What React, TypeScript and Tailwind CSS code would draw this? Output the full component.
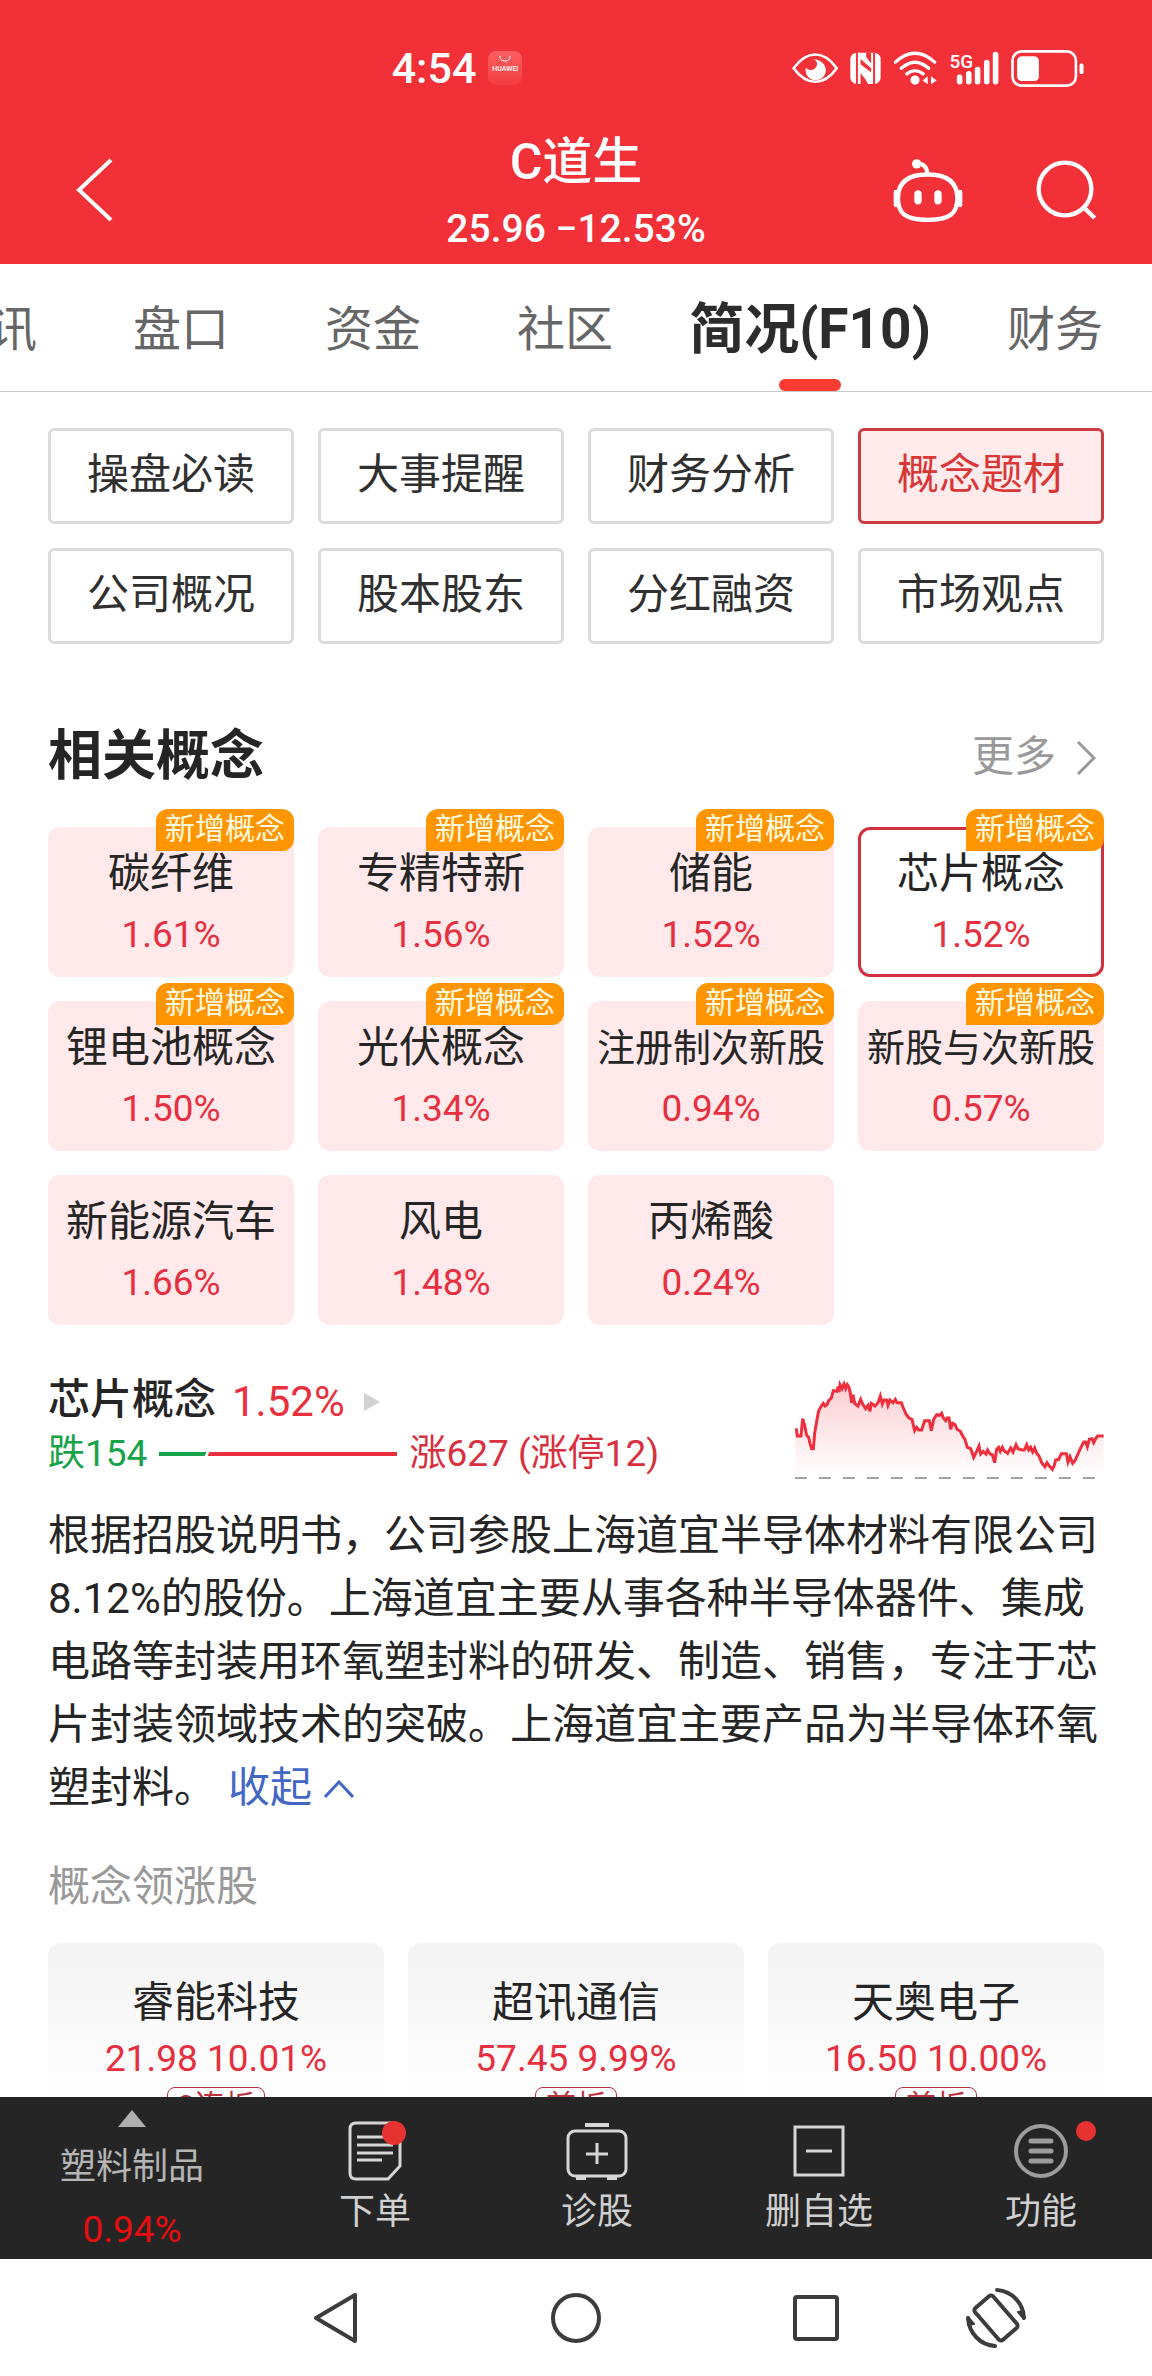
import React from 'react';

interface Concept {
  name: string;
  change: string;
  isNew?: boolean;
  active?: boolean;
}

interface Stock {
  name: string;
  price: string;
  change: string;
  tag: string;
}

const tabs = ['资讯', '盘口', '资金', '社区', '简况(F10)', '财务'];
const activeTab = '简况(F10)';

const sections = [
  '操盘必读',
  '大事提醒',
  '财务分析',
  '概念题材',
  '公司概况',
  '股本股东',
  '分红融资',
  '市场观点',
];
const activeSection = '概念题材';

const concepts: Concept[] = [
  { name: '碳纤维', change: '1.61%', isNew: true },
  { name: '专精特新', change: '1.56%', isNew: true },
  { name: '储能', change: '1.52%', isNew: true },
  { name: '芯片概念', change: '1.52%', isNew: true, active: true },
  { name: '锂电池概念', change: '1.50%', isNew: true },
  { name: '光伏概念', change: '1.34%', isNew: true },
  { name: '注册制次新股', change: '0.94%', isNew: true },
  { name: '新股与次新股', change: '0.57%', isNew: true },
  { name: '新能源汽车', change: '1.66%' },
  { name: '风电', change: '1.48%' },
  { name: '丙烯酸', change: '0.24%' },
];

const stocks: Stock[] = [
  { name: '睿能科技', price: '21.98', change: '10.01%', tag: '2连板' },
  { name: '超讯通信', price: '57.45', change: '9.99%', tag: '首板' },
  { name: '天奥电子', price: '16.50', change: '10.00%', tag: '首板' },
];

const trend =
  '106,244 109,236 112,258 123,258 128,206 134,226 140,256 146,262 150,280 155,296 160,296 164,250 170,214 176,182 184,168 190,160 195,168 201,164 206,152 214,144 220,122 231,124 234,110 237,126 240,104 246,116 252,102 257,116 262,104 267,112 271,130 275,158 279,134 284,160 294,168 302,148 309,164 317,176 324,166 330,184 334,160 345,168 354,158 361,138 367,162 372,150 380,150 384,166 390,150 399,158 406,148 411,158 424,158 430,174 438,192 447,204 456,208 464,242 470,232 476,240 485,240 494,212 508,212 514,242 521,208 530,194 539,196 545,190 550,204 557,212 561,204 567,204 572,238 578,220 585,224 591,238 601,244 608,258 615,268 622,292 632,296 641,322 650,304 657,288 662,312 670,304 678,312 683,300 690,312 697,314 704,338 710,298 716,292 721,304 727,292 732,302 743,310 752,294 759,306 768,284 774,296 786,300 793,300 800,284 806,300 812,292 818,306 824,294 830,310 837,318 845,338 855,350 861,338 868,348 877,358 883,346 887,330 896,328 904,311 919,311 924,336 930,320 938,340 945,332 953,314 961,296 971,276 977,276 982,290 988,268 996,266 1001,278 1007,266 1013,258 1031,258';

const EyeIcon = () => (
  <svg viewBox="94 64 140 96" className="h-8 w-[46px]" fill="none">
    <path d="M99 113 C120 84 140 71 165 71 S210 84 230 113 C210 142 190 154 165 154 S120 142 99 113Z" stroke="#fff" strokeWidth="8" />
    <path d="M157 85 C172 87 174 102 165 112 C157 121 144 119 136 111 C132 132 146 149 166 149 C184 149 197 135 197 118 C197 100 180 85 157 85Z" fill="#fff" />
  </svg>
);

const NfcIcon = () => (
  <svg viewBox="269 64 94 98" className="h-[33px] w-[31px]" fill="#f13037">
    <rect x="270" y="65" width="92" height="95" rx="20" fill="#fff" />
    <path d="M287 65 L293 65 V160 H287Z M339 65 H345 V160 H339Z" />
    <path d="M318 65 H333 V98 L318 78Z M301 84 L333 112 V124 L301 100Z M301 127 L316 146 L324 160 H301Z" />
  </svg>
);

const WifiIcon = () => (
  <svg viewBox="398 60 134 104" className="h-[34px] w-11" fill="none">
    <g stroke="#fff" strokeWidth="10" strokeLinecap="round">
      <path d="M405 94 Q465 40 525 94" />
      <path d="M423 113 Q465 76 507 113" />
      <path d="M440 130 Q465 110 490 130" />
    </g>
    <circle cx="465" cy="149" r="14" fill="#fff" />
    <path d="M488 150 L504 137 V162Z M531 150 L514 137 V162Z" fill="#fff" />
  </svg>
);

const SignalIcon = () => (
  <svg viewBox="566 60 150 104" className="h-[34px] w-[50px]">
    <text x="566" y="111" fontSize="58" fontWeight="500" fill="#fff" className="font-['Roboto',sans-serif]">
      5G
    </text>
    <g stroke="#fff" strokeWidth="17" strokeLinecap="round">
      <path d="M597 140 V154 M625 130 V154 M652 117 V154 M680 95 V154 M707 71 V154" />
    </g>
  </svg>
);

const BatteryIcon = () => (
  <svg viewBox="752 56 220 112" className="h-[37px] w-[73px]">
    <rect x="756" y="60" width="192" height="104" rx="28" fill="none" stroke="#fff" strokeWidth="8" />
    <rect x="770" y="75" width="66" height="75" rx="14" fill="#fff" />
    <rect x="959" y="97" width="12" height="32" rx="5" fill="#fff" />
  </svg>
);

const RobotIcon = () => (
  <svg viewBox="399 384 210 194" className="h-[65px] w-[70px]" fill="none" stroke="#fff">
    <circle cx="470" cy="401" r="14" fill="#fff" stroke="none" />
    <path d="M470 399 Q502 400 502 433" strokeWidth="12" />
    <path d="M503 433 C560 433 592 455 592 504 C592 550 570 569 503 569 S414 550 414 504 C414 455 446 433 503 433Z" strokeWidth="13" />
    <path d="M408 486 V524 M600 486 V524" strokeWidth="14" strokeLinecap="round" />
    <path d="M474 491 V512 M534 491 V512" strokeWidth="22" strokeLinecap="round" />
  </svg>
);

const SearchIcon = () => (
  <svg viewBox="827 394 180 180" className="h-[60px] w-[60px]" fill="none" stroke="#fff" strokeWidth="13">
    <circle cx="914" cy="481" r="79" />
    <path d="M970 536 L1003 568" />
  </svg>
);

const OrderIcon = () => (
  <svg viewBox="0 0 54 60" className="h-[60px] w-[54px]" fill="none" stroke="#d6d6d6" strokeWidth="3">
    <path d="M8 2 H46 Q52 2 52 8 V45 L40 58 H8 Q2 58 2 52 V8 Q2 2 8 2Z" />
    <path d="M9 16 H45 M9 24 H45 M9 32 H45 M9 39 H34" />
  </svg>
);

const DiagnoseIcon = () => (
  <svg viewBox="0 0 62 60" className="h-[60px] w-[62px]" fill="none" stroke="#d6d6d6" strokeWidth="3">
    <rect x="2" y="10" width="58" height="45" rx="7" />
    <path d="M31 22 V43 M20 33 H42" />
    <path d="M19 4 H43 M10 57 H20 M41 57 H51" strokeWidth="4" />
  </svg>
);

const RemoveIcon = () => (
  <svg viewBox="0 0 52 60" className="h-[60px] w-[52px]" fill="none" stroke="#d6d6d6" strokeWidth="3">
    <rect x="2" y="6" width="48" height="48" />
    <path d="M13 30 H39" />
  </svg>
);

const MenuIcon = () => (
  <svg viewBox="0 0 56 60" className="h-[60px] w-14" fill="none" stroke="#9c9c9c" strokeWidth="4">
    <circle cx="28" cy="30" r="25" />
    <path d="M18 20 H38 M18 30 H38 M18 40 H38" strokeWidth="5" strokeLinecap="round" />
  </svg>
);

const RotateIcon = () => (
  <svg viewBox="0 0 62 62" className="h-[62px] w-[62px]" fill="none" stroke="#3c3c3c" strokeWidth="4" strokeLinecap="round" strokeLinejoin="round">
    <rect x="19" y="10" width="24" height="42" rx="3" transform="rotate(-41 31 31)" />
    <path d="M32 3 C47 4 58 16 59 31" />
    <path d="M30 59 C15 58 4 46 3 31" />
    <path d="M53 25 L59 24 L59 32Z M9 37 L3 38 L3 30Z" strokeWidth="2" fill="#3c3c3c" />
  </svg>
);

const actions = [
  { label: '下单', icon: OrderIcon, dot: 'top-6 left-1/2 ml-[7px] h-6 w-6' },
  { label: '诊股', icon: DiagnoseIcon, dot: '' },
  { label: '删自选', icon: RemoveIcon, dot: '' },
  { label: '功能', icon: MenuIcon, dot: 'top-6 left-1/2 ml-[35px] h-5 w-5' },
];

const Header = () => (
  <header className="bg-[#f13037] pt-10 text-white">
    <div className="flex h-14 items-center justify-between pr-[68px] pl-[34%]">
      <div className="flex items-center gap-3">
        <span className="text-[43px] leading-none font-medium">4:54</span>
        <span className="flex h-[34px] w-[34px] flex-col items-center rounded-lg bg-linear-to-b from-[#fb5f60] to-[#f23c42] pt-1 text-[7px] leading-3 font-medium">
          <svg viewBox="0 0 12 8" className="h-2 w-3" fill="none" stroke="#fff">
            <path d="M1 1 Q1 6 6 6 T11 1" />
          </svg>
          HUAWEI
        </span>
      </div>
      <div className="flex items-center gap-3">
        <EyeIcon />
        <NfcIcon />
        <WifiIcon />
        <SignalIcon />
        <BatteryIcon />
      </div>
    </div>
    <div className="mt-5 grid h-37 grid-cols-[1fr_auto_1fr] items-center">
      <button type="button" aria-label="返回" className="ml-[75px] w-10">
        <svg viewBox="0 0 40 64" className="h-16 w-10" fill="none" stroke="#fff" strokeWidth="4">
          <path d="M36 2 L4 32 L36 62" />
        </svg>
      </button>
      <div className="pt-[14px] text-center">
        <h1 className="text-[50px] leading-[64px] font-medium">C道生</h1>
        <p className="text-[39px] leading-[70px] font-medium">25.96 −12.53%</p>
      </div>
      <div className="flex items-center justify-end gap-[73px] pr-14">
        <button type="button" aria-label="智能助手">
          <RobotIcon />
        </button>
        <button type="button" aria-label="搜索">
          <SearchIcon />
        </button>
      </div>
    </div>
  </header>
);

const TabBar = () => (
  <nav className="h-32 overflow-hidden border-b border-[#c8c8c8]">
    <div className="-ml-[59px] flex h-full gap-24 pt-1 whitespace-nowrap">
      {tabs.map((tab) =>
        tab === activeTab ? (
          <a key={tab} href="#" className="relative -mx-5 flex w-[242px] shrink-0 items-center justify-center text-[55px] font-bold text-[#2c2c2c]">
            {tab}
            <span className="absolute bottom-0 h-3 w-[62px] rounded-md bg-[#fb3c33]" />
          </a>
        ) : (
          <a key={tab} href="#" className="flex shrink-0 items-center text-[48px] text-[#666]">
            {tab}
          </a>
        )
      )}
    </div>
  </nav>
);

const ConceptCard = ({ concept }: { concept: Concept }) => (
  <button
    type="button"
    className={`relative h-[150px] rounded-xl border-3 pt-[10px] text-center align-top leading-[62px] whitespace-nowrap ${
      concept.active ? 'border-[#d3303f] bg-white' : 'border-[#ffe9ea] bg-[#ffe9ea]'
    }`}
  >
    {concept.isNew && (
      <span className="absolute -top-[21px] -right-[3px] h-[42px] w-[138px] rounded-xl rounded-bl-none bg-[#ff9500] text-[30px] leading-[40px] text-[#fffbe0]">
        新增概念
      </span>
    )}
    <span className={`block h-[61px] text-[#252525] ${concept.name.length > 5 ? 'text-[38px]' : 'text-[42px]'}`}>
      {concept.name}
    </span>
    <span className="block h-[67px] text-[37px] text-[#e62f3f]">{concept.change}</span>
  </button>
);

const TrendChart = () => (
  <svg viewBox="105 90 927 300" className="h-[100px] w-[309px]" fill="none">
    <defs>
      <linearGradient id="trendFill" x1="0" y1="0" x2="0" y2="1">
        <stop offset="0" stopColor="#ee2f3e" stopOpacity="0.24" />
        <stop offset="1" stopColor="#ee2f3e" stopOpacity="0" />
      </linearGradient>
    </defs>
    <polygon points={`106,378 ${trend} 1031,378`} fill="url(#trendFill)" />
    <polyline points={trend} stroke="#ee2f3e" strokeWidth="9" />
    <path d="M105 384 H1032" stroke="#a3a3a3" strokeWidth="6" strokeDasharray="36 36" />
  </svg>
);

const ConceptDetail = () => (
  <section className="mt-[45px]">
    <div className="flex h-[110px] items-end justify-between">
      <div className="pb-1">
        <h3 className="flex items-center text-[42px] leading-[60px] font-medium text-[#252525]">
          芯片概念
          <span className="ml-4 pt-1 font-normal text-[#ea2f3e]">1.52%</span>
          <svg viewBox="0 0 18 20" className="mt-1 ml-[18px] h-5 w-[18px]">
            <path d="M1 1 L17 10 L1 19Z" fill="#d2d2d2" />
          </svg>
        </h3>
        <div className="flex h-11 items-center text-[37px] leading-[44px]">
          <span className="text-[#16a34a]">跌154</span>
          <svg viewBox="0 0 240 4" className="mx-3 h-1 w-[238px]">
            <path d="M0 0 H48 L46 4 H0Z" fill="#16a34a" />
            <path d="M51 0 H240 V4 H49Z" fill="#ea2f3e" />
          </svg>
          <span className="text-[#d93040]">涨627 (涨停12)</span>
        </div>
      </div>
      <TrendChart />
    </div>
    <p className="mt-6 text-[42px] leading-[63px] text-[#252525]">
      根据招股说明书，公司参股上海道宜半导体材料有限公司8.12%的股份。上海道宜主要从事各种半导体器件、集成电路等封装用环氧塑封料的研发、制造、销售，专注于芯片封装领域技术的突破。上海道宜主要产品为半导体环氧塑封料。
      <button type="button" className="ml-3 text-[#4268c6]">
        收起
        <svg viewBox="0 0 30 18" className="mb-1 ml-3 inline h-[18px] w-[30px]" fill="none" stroke="currentColor" strokeWidth="3">
          <path d="M1 17 L15 2 L29 17" />
        </svg>
      </button>
    </p>
  </section>
);

const StockCard = ({ stock }: { stock: Stock }) => (
  <a href="#" className="flex h-[216px] flex-col items-center rounded-xl bg-linear-to-b from-[#f4f4f4] to-white to-80% pt-8 leading-[56px]">
    <span className="text-[42px] text-[#252525]">{stock.name}</span>
    <span className="text-[37px] text-[#e62f3f]">
      {stock.price} {stock.change}
    </span>
    <span className="rounded-lg border border-[#b8323e] px-[10px] text-[30px] leading-[36px] text-[#b8323e]">{stock.tag}</span>
  </a>
);

const ActionBar = () => (
  <footer className="grid h-[162px] shrink-0 grid-cols-[264fr_222fr_222fr_222fr_222fr] bg-[#252525] text-[36px] text-[#d0d0d0]">
    <button type="button" className="flex flex-col items-center pt-3">
      <svg viewBox="0 0 30 18" className="h-[18px] w-[30px]">
        <path d="M15 1 L29 18 H1Z" fill="#b0b0b0" />
      </svg>
      <span className="mt-2 leading-[64px] text-[#b5b5b5]">塑料制品</span>
      <span className="text-[37px] leading-[62px] text-[#e60e10]">0.94%</span>
    </button>
    {actions.map((action) => (
      <button key={action.label} type="button" className="relative flex flex-col items-center pt-6">
        <action.icon />
        <span className="leading-[62px]">{action.label}</span>
        {action.dot && <span className={`absolute rounded-full bg-[#e73232] ${action.dot}`} />}
      </button>
    ))}
  </footer>
);

const SystemNav = () => (
  <nav className="grid h-[117px] shrink-0 grid-cols-[216fr_240fr_240fr_240fr_120fr_96fr] items-center justify-items-center bg-white">
    <button type="button" aria-label="后退" className="col-start-2">
      <svg viewBox="0 0 46 54" className="h-[54px] w-[46px]" fill="none" stroke="#3c3c3c" strokeWidth="4" strokeLinejoin="round">
        <path d="M42 4 V50 L3 27Z" />
      </svg>
    </button>
    <button type="button" aria-label="主页">
      <svg viewBox="0 0 52 52" className="h-[52px] w-[52px]" fill="none" stroke="#3c3c3c" strokeWidth="4">
        <circle cx="26" cy="26" r="23" />
      </svg>
    </button>
    <button type="button" aria-label="最近任务">
      <svg viewBox="0 0 46 46" className="h-[46px] w-[46px]" fill="none" stroke="#3c3c3c" strokeWidth="4">
        <rect x="2" y="2" width="42" height="42" rx="2" />
      </svg>
    </button>
    <button type="button" aria-label="旋转屏幕">
      <RotateIcon />
    </button>
  </nav>
);

const App = () => {
  return (
    <div className="flex h-screen flex-col bg-white font-['Roboto','Noto_Sans_CJK_SC',sans-serif]">
      <Header />
      <TabBar />
      <main className="min-h-0 flex-1 overflow-y-auto px-12 pt-9 [scrollbar-width:none]">
        <div className="grid grid-cols-4 gap-6">
          {sections.map((section) => (
            <button
              key={section}
              type="button"
              className={`h-24 rounded-md border-3 pb-1 text-[42px] ${
                section === activeSection
                  ? 'border-[#cb3d40] bg-[#ffebeb] text-[#d93636]'
                  : 'border-[#dcdcdc] text-[#303030]'
              }`}
            >
              {section}
            </button>
          ))}
        </div>

        <div className="mt-20 flex h-16 items-center justify-between">
          <h2 className="text-[54px] font-bold text-[#252525]">相关概念</h2>
          <a href="#" className="flex items-center gap-5 pr-2 text-[42px] text-[#999]">
            更多
            <svg viewBox="0 0 20 34" className="mt-1 h-[34px] w-5" fill="none" stroke="currentColor" strokeWidth="3">
              <path d="M2 1 L18 17 L2 33" />
            </svg>
          </a>
        </div>
        <div className="mt-[39px] grid grid-cols-4 gap-6">
          {concepts.map((concept) => (
            <ConceptCard key={concept.name} concept={concept} />
          ))}
        </div>

        <ConceptDetail />

        <h3 className="mt-9 text-[42px] leading-[63px] text-[#999]">概念领涨股</h3>
        <div className="mt-[25px] grid grid-cols-3 gap-6">
          {stocks.map((stock) => (
            <StockCard key={stock.name} stock={stock} />
          ))}
        </div>
      </main>
      <ActionBar />
      <SystemNav />
    </div>
  );
};

export default App;
